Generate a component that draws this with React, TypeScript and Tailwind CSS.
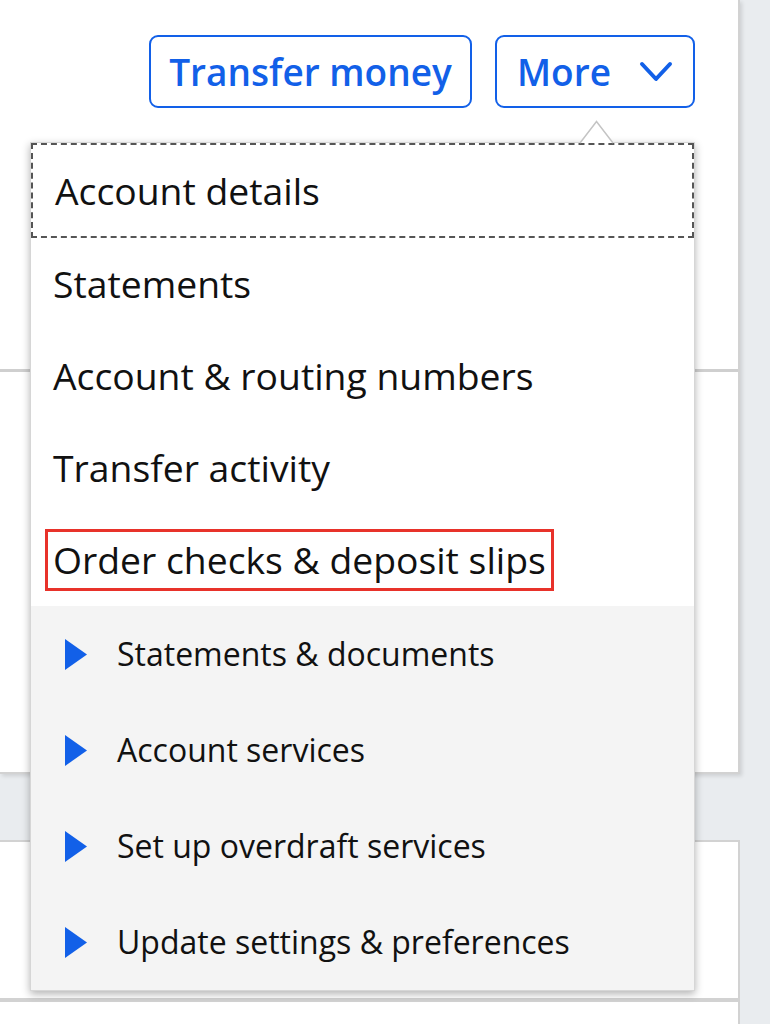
import * as React from "react"

const mainItems = ["Statements", "Account & routing numbers", "Transfer activity"]
const subItems = ["Statements & documents", "Account services", "Set up overdraft services", "Update settings & preferences"]

function Triangle() {
    return (
        <svg width="22" height="31" viewBox="0 0 22 31" className="shrink-0">
            <path d="M0 0 L22 15.5 L0 31 Z" fill="#1260e8" />
        </svg>
    )
}

export default function App() {
    return (
        <div className="relative flex w-[770px] h-[1024px] overflow-hidden bg-[#e9ecef] font-['Open_Sans',sans-serif]">
            <div className="flex flex-col w-[740px] shrink-0">
                <div className="h-[774px] bg-white border-r-2 border-b-2 border-[#d2d2d2] shadow-[2px_2px_4px_rgba(0,0,0,0.12)] flex flex-col">
                    <div className="h-[372px] border-b-[3px] border-[#cfcfcf]">
                        <div className="flex justify-end gap-[23px] pt-[35px] pr-[43px]">
                            <button className="h-[73px] w-[323px] rounded-[9px] border-2 border-[#1260e8] text-[#1260e8] text-[37px] font-semibold leading-none">
                                Transfer money
                            </button>
                            <button className="h-[73px] w-[200px] rounded-[9px] border-2 border-[#1260e8] text-[#1260e8] text-[37px] font-semibold leading-none flex items-center pl-[20px] gap-[28px]">
                                More
                                <svg width="34" height="22" viewBox="0 0 34 22">
                                    <polyline points="3,3 17,18 31,3" fill="none" stroke="#1260e8" strokeWidth="4" strokeLinecap="round" strokeLinejoin="round" />
                                </svg>
                            </button>
                        </div>
                    </div>
                </div>
                <div className="h-[66px]" />
                <div className="h-[162px] bg-white border-r-2 border-t-2 border-b-[4px] border-[#d2d2d2]" />
                <div className="flex-1 bg-white border-r-2 border-[#d2d2d2]" />
            </div>

            <div className="absolute left-[30px] top-[142px] w-[665px] bg-white shadow-[0_3px_8px_rgba(0,0,0,0.3)] border border-[#d6d6d6] text-[#111]">
                <div className="h-[95px] flex items-center pl-[22px] border-2 border-dashed border-[#555] text-[37.3px]">
                    Account details
                </div>
                {mainItems.map(item => (
                    <div key={item} className="h-[92px] flex items-center pl-[22px] text-[37.3px]">
                        {item}
                    </div>
                ))}
                <div className="h-[92px] flex items-center pl-[14px] text-[37.3px]">
                    <span className="border-[3px] border-[#e8322a] px-[5px] leading-[56px]">Order checks &amp; deposit slips</span>
                </div>
                <div className="bg-[#f4f4f4]">
                    {subItems.map(item => (
                        <div key={item} className="h-[96px] flex items-center pl-[34px] gap-[30px] text-[32px]">
                            <Triangle />
                            {item}
                        </div>
                    ))}
                </div>
            </div>

            <svg className="absolute left-[580px] top-[120px]" width="33" height="24" viewBox="0 0 33 24">
                <path d="M0 23 L16.5 1.5 L33 23 Z" fill="white" />
                <path d="M0 23 L16.5 1.5 L33 23" fill="none" stroke="#c4c4c4" strokeWidth="1.5" />
            </svg>
        </div>
    )
}
